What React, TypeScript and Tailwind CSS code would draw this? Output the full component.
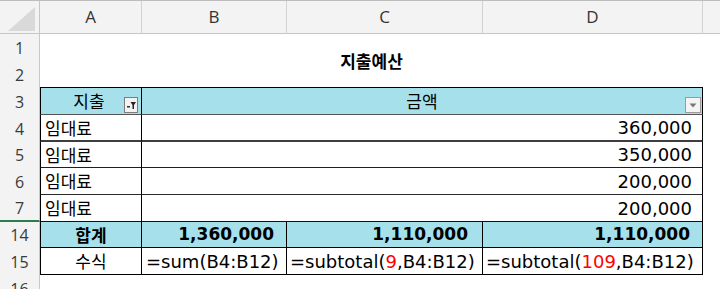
import React from 'react';

const kr = "font-['Noto_Sans_CJK_KR','Noto_Sans',sans-serif]";
const num = "font-['DejaVu_Sans',Verdana,sans-serif]";
const ui = "font-['Open_Sans','Noto_Sans',sans-serif]";

const RowHead: React.FC<{ n: string; green?: boolean }> = ({ n, green }) => (
  <div
    className={`flex items-center justify-center bg-[#f3f3f3] border-r border-[#c9c9c9] text-[16px] text-[#3a3a3a] ${ui} ${
      green ? 'border-b-2 border-b-[#2a7d4f]' : ''
    }`}
  >
    {n}
  </div>
);

const ColHead: React.FC<{ c: string }> = ({ c }) => (
  <div
    className={`flex items-center justify-center bg-[#f3f3f3] border-r border-b border-[#d2d2d2] border-b-[#c6c6c6] text-[17px] text-[#333] ${ui}`}
  >
    {c}
  </div>
);

const FilterBtn: React.FC = () => (
  <svg width="14" height="16" viewBox="0 0 14 16" className="absolute right-[3px] top-[9px]">
    <rect x="0.5" y="0.5" width="13" height="15" fill="#f2f2f2" stroke="#7d7d7d" />
    <rect x="3" y="9" width="3" height="1.5" fill="#333" />
    <path d="M6.5 5 H12 L10 8 V12 H8.5 V8 Z" fill="#222" />
  </svg>
);

const DropBtn: React.FC = () => (
  <svg width="16" height="16" viewBox="0 0 16 16" className="absolute right-[1px] top-[9px]">
    <rect x="0.5" y="0.5" width="15" height="15" fill="#f4f4f4" stroke="#9a9a9a" />
    <path d="M4.5 6.5 H11.5 L8 10.5 Z" fill="#777" />
  </svg>
);

const amounts = ['360,000', '350,000', '200,000', '200,000'];
const rowLines = [
  'border-b-2 border-b-[#3d3d3d]',
  'border-b border-b-[#1f1f1f]',
  'border-b border-b-[#2a2a2a]',
  'border-b border-b-[#111]',
];
const rowNums = ['4', '5', '6', '7'];

export default function App() {
  return (
    <div className="w-[720px] h-[289px] overflow-hidden bg-white border-t border-[#bdbdbd] text-black">
      <div className="grid grid-cols-[40px_102px_145px_196px_220px_1fr] grid-rows-[33px_27px_27px_27px_27px_26px_27px_27px_26px_27px_27px]">
        {/* column headers */}
        <div className="relative bg-[#f3f3f3] border-r border-b border-[#c6c6c6]">
          <svg width="28" height="24" viewBox="0 0 28 24" className="absolute right-[3px] bottom-[2px]">
            <path d="M27 0 V24 H0 Z" fill="#d9d9d9" />
          </svg>
        </div>
        <ColHead c="A" />
        <ColHead c="B" />
        <ColHead c="C" />
        <ColHead c="D" />
        <div className="bg-[#f3f3f3] border-b border-[#c6c6c6]" />

        {/* rows 1-2 : title */}
        <RowHead n="1" />
        <div className={`col-span-4 row-span-2 flex items-center justify-center text-[17px] font-bold border-b border-black ${kr}`}>
          지출예산
        </div>
        <div />
        <RowHead n="2" />
        <div />

        {/* row 3 : header */}
        <RowHead n="3" />
        <div className={`relative flex items-center justify-center bg-[#a6e0ea] border-l border-r border-b border-black border-b-[#555] text-[17px] pb-[1px] ${kr}`}>
          <span className="mr-[4px]">지출</span>
          <FilterBtn />
        </div>
        <div className={`col-span-3 relative flex items-center justify-center bg-[#a6e0ea] border-r border-b border-black border-b-[#555] text-[17px] pb-[1px] ${kr}`}>
          금액
          <DropBtn />
        </div>
        <div />

        {/* rows 4-7 */}
        {amounts.map((a, i) => (
          <React.Fragment key={i}>
            <RowHead n={rowNums[i]} green={i === 3} />
            <div className={`flex items-center pl-[4px] text-[17px] border-l border-r border-black ${rowLines[i]} ${kr}`}>
              임대료
            </div>
            <div className={`col-span-3 flex items-center justify-end pr-[10px] text-[18px] border-r border-black ${rowLines[i]} ${num}`}>
              {a}
            </div>
            <div />
          </React.Fragment>
        ))}

        {/* row 14 : totals */}
        <RowHead n="14" />
        <div className={`flex items-center justify-center bg-[#a6e0ea] border-l border-r border-b border-black text-[17px] font-bold ${kr}`}>
          합계
        </div>
        <div className={`flex items-center justify-end pr-[12px] bg-[#a6e0ea] border-r border-b border-black text-[17px] font-bold ${num}`}>
          1,360,000
        </div>
        <div className={`flex items-center justify-end pr-[14px] bg-[#a6e0ea] border-r border-b border-black text-[17px] font-bold ${num}`}>
          1,110,000
        </div>
        <div className={`flex items-center justify-end pr-[12px] bg-[#a6e0ea] border-r border-b border-black text-[17px] font-bold ${num}`}>
          1,110,000
        </div>
        <div />

        {/* row 15 : formulas */}
        <RowHead n="15" />
        <div className={`flex items-center justify-center border-l border-r border-b border-black text-[17px] ${kr}`}>
          수식
        </div>
        <div className={`flex items-center pl-[4px] border-r border-b border-black text-[18px] whitespace-nowrap ${num}`}>
          =sum(B4:B12)
        </div>
        <div className={`flex items-center pl-[3px] border-r border-b border-black text-[18px] whitespace-nowrap ${num}`}>
          =subtotal(<span className="text-[#ff0000]">9</span>,B4:B12)
        </div>
        <div className={`flex items-center pl-[3px] border-r border-b border-black text-[18px] whitespace-nowrap ${num}`}>
          =subtotal(<span className="text-[#ff0000]">109</span>,B4:B12)
        </div>
        <div />

        {/* row 16 */}
        <RowHead n="16" />
        <div className="col-span-5" />
      </div>
    </div>
  );
}
